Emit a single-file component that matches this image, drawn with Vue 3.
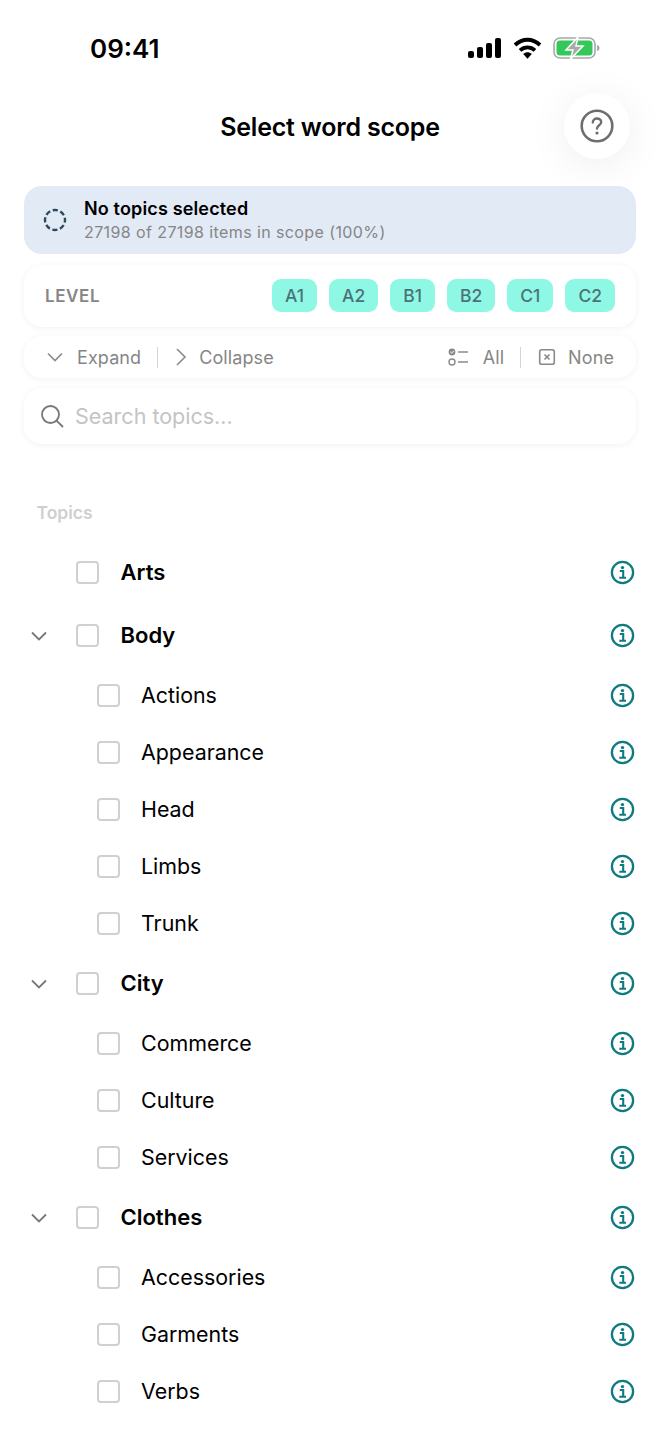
<template>
  <div class="screen">
    <div class="status-bar">
      <span class="time">09:41</span>
      <div class="status-icons">
        <svg width="34" height="20" viewBox="0 0 34 20">
          <rect x="0" y="13" width="6" height="7" rx="2" fill="#000" />
          <rect x="9" y="9" width="6" height="11" rx="2" fill="#000" />
          <rect x="18" y="5" width="6" height="15" rx="2" fill="#000" />
          <rect x="27" y="0" width="6" height="20" rx="2" fill="#000" />
        </svg>
        <svg width="29" height="22" viewBox="0 0 29 22">
          <path d="M2 8C9.500 1 19.500 1 27 8" fill="none" stroke="#000" stroke-width="3.800" />
          <path d="M7 13.400C11.500 9.400 17.500 9.400 22 13.400" fill="none" stroke="#000" stroke-width="3.800" />
          <path d="M10.200 17C13 14.800 16 14.800 18.800 17L14.500 21.800Z" fill="#000" />
        </svg>
        <svg width="47" height="22" viewBox="0 0 47 22">
          <rect x="1" y="1" width="41" height="20" rx="6" fill="none" stroke="#a8a8a8" stroke-width="1.600" />
          <path d="M44 8C46 8.500 46.500 9.500 46.500 11C46.500 12.500 46 13.500 44 14Z" fill="#a8a8a8" />
          <rect x="3.500" y="3.500" width="36" height="15" rx="3.500" fill="#34c759" />
          <path d="M25 0L13 13H20L17.500 22L30 9H23Z" fill="#a8a8a8" stroke="#fff" stroke-width="1.500" />
        </svg>
      </div>
    </div>

    <header class="title-row">
      <h1>Select word scope</h1>
      <button class="help-btn">
        <svg width="34" height="34" viewBox="0 0 34 34">
          <circle cx="17" cy="17" r="15.300" fill="none" stroke="#6e6e6e" stroke-width="2.600" />
          <path d="M12.800 13.400C12.800 11 14.700 9.500 17 9.500C19.400 9.500 21.200 11 21.200 13.200C21.200 16.200 17 16.300 17 19.500" fill="none" stroke="#6e6e6e" stroke-width="2.400" stroke-linecap="round" />
          <circle cx="17" cy="24" r="1.600" fill="#6e6e6e" />
        </svg>
      </button>
    </header>

    <section class="summary">
      <svg class="summary-icon" width="24" height="24" viewBox="0 0 24 24">
        <circle cx="12" cy="12" r="10" fill="none" stroke="#2b4a5a" stroke-width="2.400" stroke-dasharray="5.200 2.650" stroke-dashoffset="2.600" />
      </svg>
      <div>
        <div class="summary-title">No topics selected</div>
        <div class="summary-sub">27198 of 27198 items in scope (100%)</div>
      </div>
    </section>

    <section class="card level-card">
      <span class="level-label">LEVEL</span>
      <div class="levels">
        <span v-for="l in levels" :key="l" class="chip">{{ l }}</span>
      </div>
    </section>

    <section class="card toolbar">
      <div class="tool-group">
        <span class="tool">
          <svg width="18" height="18" viewBox="0 0 18 18"><path d="M2 5.500L9 12.500L16 5.500" class="line" /></svg>
          Expand
        </span>
        <span class="sep"></span>
        <span class="tool collapse">
          <svg width="18" height="18" viewBox="0 0 18 18"><path d="M5 1L13 9L5 17" class="line" /></svg>
          Collapse
        </span>
      </div>
      <div class="tool-group">
        <span class="tool all">
          <svg width="22" height="18" viewBox="0 0 22 18">
            <circle cx="4" cy="4" r="3.400" fill="#8a8a8a" />
            <path d="M2.400 4L3.600 5.200L5.700 2.900" fill="none" stroke="#fff" stroke-width="1" />
            <circle cx="4" cy="14" r="3" fill="none" stroke="#8a8a8a" stroke-width="1.400" />
            <path d="M10 4H20M10 14H20" class="line" />
          </svg>
          All
        </span>
        <span class="sep"></span>
        <span class="tool none">
          <svg width="18" height="18" viewBox="0 0 18 18">
            <rect x="1.700" y="1.700" width="14.600" height="14.600" rx="2" class="line" />
            <path d="M6.500 6.500L11.500 11.500M11.500 6.500L6.500 11.500" class="line" />
          </svg>
          None
        </span>
      </div>
    </section>

    <section class="card search">
      <svg width="24" height="24" viewBox="0 0 24 24">
        <circle cx="10.500" cy="10.500" r="8.500" fill="none" stroke="#777" stroke-width="1.800" />
        <path d="M16.800 16.800L22.500 22.500" fill="none" stroke="#777" stroke-width="1.800" stroke-linecap="round" />
      </svg>
      <span class="placeholder">Search topics...</span>
    </section>

    <div class="topics-label">Topics</div>

    <ul class="topics">
      <li v-for="t in topics" :key="t.name" class="topic" :class="t.child ? 'child' : 'parent'">
        <span class="caret">
          <svg v-if="t.open" width="18" height="18" viewBox="0 0 18 18"><path d="M2 5.500L9 12.500L16 5.500" fill="none" stroke="#777" stroke-width="1.800" /></svg>
        </span>
        <span class="check"></span>
        <span class="name">{{ t.name }}</span>
        <svg class="info" width="25" height="25" viewBox="0 0 25 25">
          <circle cx="12.500" cy="12.500" r="10.600" fill="none" stroke="#0f7a80" stroke-width="2.300" />
          <circle cx="12.500" cy="7.600" r="1.700" fill="#0f7a80" />
          <path d="M9.800 11H13.200V17.300M9.300 17.800H16" fill="none" stroke="#0f7a80" stroke-width="2.100" />
        </svg>
      </li>
    </ul>
  </div>
</template>

<script setup>
const levels = ['A1', 'A2', 'B1', 'B2', 'C1', 'C2']

const topics = [
  { name: 'Arts' },
  { name: 'Body', open: true },
  { name: 'Actions', child: true },
  { name: 'Appearance', child: true },
  { name: 'Head', child: true },
  { name: 'Limbs', child: true },
  { name: 'Trunk', child: true },
  { name: 'City', open: true },
  { name: 'Commerce', child: true },
  { name: 'Culture', child: true },
  { name: 'Services', child: true },
  { name: 'Clothes', open: true },
  { name: 'Accessories', child: true },
  { name: 'Garments', child: true },
  { name: 'Verbs', child: true }
]
</script>

<style>
html, body {
  margin: 0;
  background: #fff;
}
</style>

<style scoped>
.screen {
  width: 660px;
  height: 1434px;
  overflow: hidden;
  background: #fff;
  font-family: Inter, "Liberation Sans", sans-serif;
  color: #000;
}

.status-bar {
  height: 92px;
  box-sizing: border-box;
  padding: 31px 60px 0 90px;
  display: flex;
  justify-content: space-between;
  align-items: flex-start;
}

.time {
  font-size: 26px;
  line-height: 36px;
  font-weight: 600;
}

.status-icons {
  display: flex;
  align-items: center;
  gap: 11px;
  padding-top: 6px;
}

.title-row {
  position: relative;
  height: 70px;
  margin-bottom: 24px;
  display: flex;
  align-items: center;
  justify-content: center;
}

.title-row h1 {
  margin: 0;
  font-size: 25px;
  font-weight: 600;
  letter-spacing: -0.2px;
}

.help-btn {
  position: absolute;
  right: 30px;
  top: 1px;
  width: 66px;
  height: 66px;
  padding: 0;
  border: none;
  border-radius: 50%;
  background: #fff;
  box-shadow: 0 6px 40px rgba(0, 0, 0, 0.07);
  display: flex;
  align-items: center;
  justify-content: center;
}

.summary {
  margin: 0 24px;
  height: 68px;
  background: #e2eaf6;
  border-radius: 18px;
  display: flex;
  align-items: center;
  gap: 17px;
  padding-left: 19px;
}

.summary-icon {
  flex: none;
}

.summary-title {
  font-size: 18px;
  line-height: 24px;
  font-weight: 600;
  letter-spacing: 0.15px;
}

.summary-sub {
  font-size: 16px;
  line-height: 22px;
  color: #868686;
  letter-spacing: 0.4px;
}

.card {
  margin: 0 24px;
  background: #fff;
  box-shadow: 0 1px 6px rgba(0, 0, 0, 0.06);
  display: flex;
  align-items: center;
}

.level-card {
  margin-top: 11px;
  height: 62px;
  border-radius: 18px;
  padding: 0 21px;
  justify-content: space-between;
}

.level-label {
  font-size: 17px;
  font-weight: 600;
  color: #868686;
  letter-spacing: 0.6px;
}

.levels {
  display: flex;
  gap: 12px;
}

.chip {
  height: 33px;
  margin-top: -1px;
  padding: 0 13px;
  display: flex;
  align-items: center;
  border-radius: 9px;
  background: #8ff8e4;
  color: #4d7179;
  font-size: 17.500px;
  font-weight: 500;
}

.toolbar {
  margin-top: 9px;
  height: 42px;
  border-radius: 18px;
  padding: 0 22px;
  justify-content: space-between;
  color: #868686;
  font-size: 18px;
  font-weight: 400;
  letter-spacing: 0.1px;
}

.tool-group {
  display: flex;
  align-items: center;
}

.tool {
  display: flex;
  align-items: center;
  gap: 13px;
}

.collapse {
  gap: 9px;
  margin-left: -2px;
}

.none {
  gap: 12px;
  margin-left: 1px;
}

.line {
  fill: none;
  stroke: #8a8a8a;
  stroke-width: 1.600;
}

.sep {
  width: 1px;
  height: 21px;
  background: #d4d4d4;
  margin: 0 16px;
}

.search {
  margin-top: 10px;
  height: 56px;
  border-radius: 18px;
  padding: 0 16px;
  gap: 11px;
}

.placeholder {
  font-size: 21.500px;
  color: #c4c4c4;
}

.topics-label {
  margin: 58px 0 0 36.500px;
  height: 22px;
  font-size: 17.500px;
  line-height: 22px;
  font-weight: 600;
  color: #cfcfcf;
}

.topics {
  list-style: none;
  margin: 17px 0 0;
  padding: 0;
}

.topic {
  display: flex;
  align-items: center;
  padding: 0 25px 0 30px;
}

.parent {
  height: 63px;
  font-weight: 600;
}

.child {
  height: 57px;
  padding-left: 51px;
  font-weight: 400;
}

.caret {
  width: 18px;
  height: 18px;
  margin-right: 28px;
  flex: none;
}

.child .caret {
  width: 0;
  margin-right: 45.500px;
}

.check {
  width: 23px;
  height: 23px;
  margin-top: -1px;
  box-sizing: border-box;
  border: 2px solid #d0d0d4;
  border-radius: 4px;
  flex: none;
}

.name {
  flex: 1;
  margin-left: 21.500px;
  padding-bottom: 2px;
  font-size: 22px;
}

.child .name {
  font-size: 21.400px;
}

.info {
  flex: none;
}
</style>
